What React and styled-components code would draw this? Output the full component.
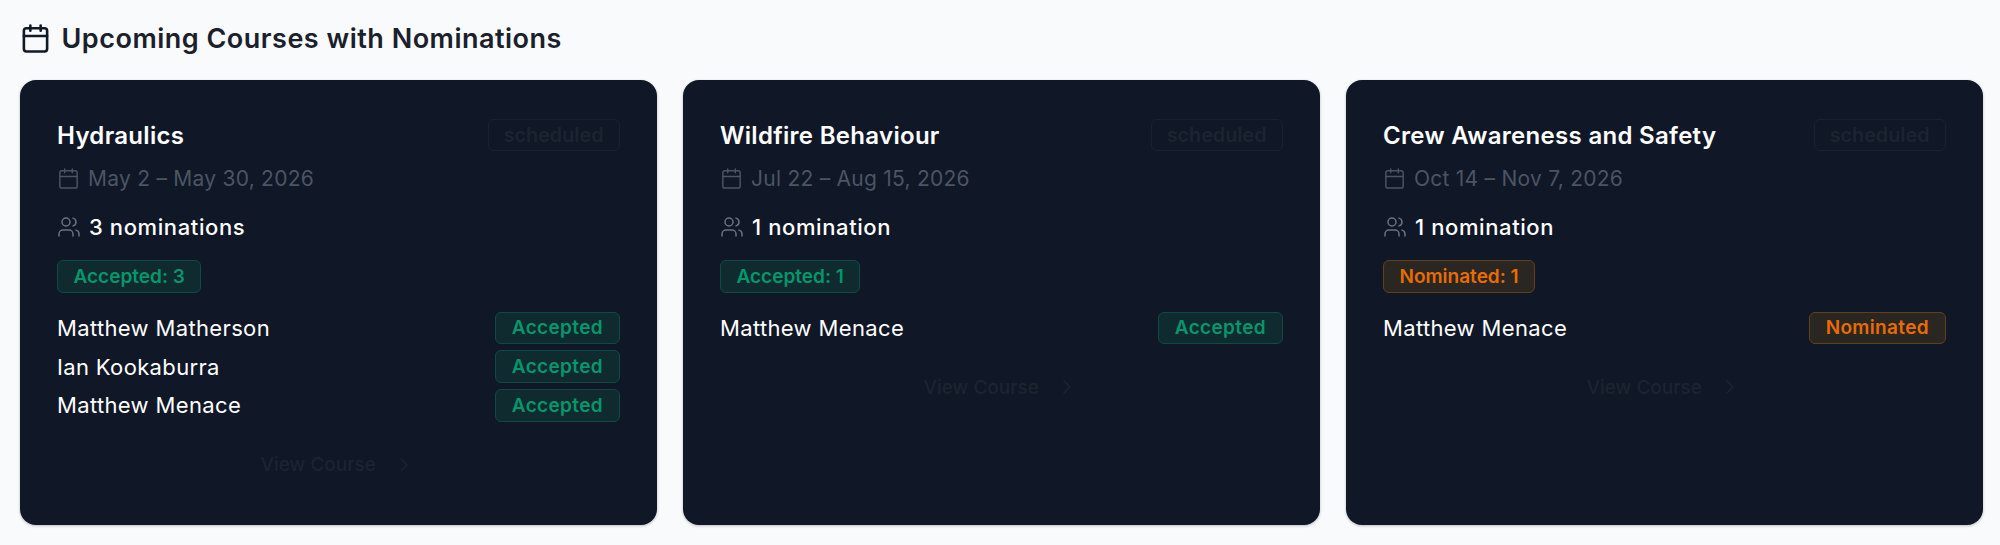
import { createGlobalStyle } from "styled-components";
import styled from "styled-components";
import { Calendar, Users, ChevronRight } from "lucide-react";

const GlobalStyle = createGlobalStyle`
  body {
    margin: 0;
    background: #f9fafc;
    font-family: Inter, "Noto Sans", sans-serif;
  }
`;

const courses = [
  {
    title: "Hydraulics",
    dates: "May 2 – May 30, 2026",
    count: "3 nominations",
    summary: { tone: "accepted", label: "Accepted: 3" },
    people: [
      { name: "Matthew Matherson", tone: "accepted", status: "Accepted" },
      { name: "Ian Kookaburra", tone: "accepted", status: "Accepted" },
      { name: "Matthew Menace", tone: "accepted", status: "Accepted" },
    ],
  },
  {
    title: "Wildfire Behaviour",
    dates: "Jul 22 – Aug 15, 2026",
    count: "1 nomination",
    summary: { tone: "accepted", label: "Accepted: 1" },
    people: [{ name: "Matthew Menace", tone: "accepted", status: "Accepted" }],
  },
  {
    title: "Crew Awareness and Safety",
    dates: "Oct 14 – Nov 7, 2026",
    count: "1 nomination",
    summary: { tone: "nominated", label: "Nominated: 1" },
    people: [{ name: "Matthew Menace", tone: "nominated", status: "Nominated" }],
  },
];

const tones = {
  accepted: { color: "#059669", bg: "#0f2b30", border: "#0f4a45" },
  nominated: { color: "#ea6c00", bg: "#2a2622", border: "#63401a" },
};

export default function App() {
  return (
    <Page>
      <GlobalStyle />
      <Heading>
        <Calendar size={31} strokeWidth={2} />
        <HeadingText>Upcoming Courses with Nominations</HeadingText>
      </Heading>
      <Grid>
        {courses.map((course) => (
          <Card key={course.title}>
            <TitleRow>
              <Title>{course.title}</Title>
              <ScheduledBadge>scheduled</ScheduledBadge>
            </TitleRow>
            <DateRow>
              <Calendar size={23} strokeWidth={1.5} />
              <span>{course.dates}</span>
            </DateRow>
            <CountRow>
              <Users size={24} strokeWidth={1.5} color="#6b7280" />
              <span>{course.count}</span>
            </CountRow>
            <SummaryRow>
              <StatusBadge $tone={course.summary.tone}>{course.summary.label}</StatusBadge>
            </SummaryRow>
            <People>
              {course.people.map((person) => (
                <Person key={person.name}>
                  <span>{person.name}</span>
                  <StatusBadge $tone={person.tone}>{person.status}</StatusBadge>
                </Person>
              ))}
            </People>
            <ViewButton>
              View Course
              <ChevronRight size={24} strokeWidth={1.5} />
            </ViewButton>
          </Card>
        ))}
      </Grid>
    </Page>
  );
}

const Page = styled.div`
  box-sizing: border-box;
  width: 2000px;
  height: 545px;
  padding: 20px 17px 20px 19.5px;
  overflow: hidden;
`;

const Heading = styled.div`
  display: flex;
  align-items: center;
  gap: 11px;
  height: 36px;
  margin-bottom: 24px;
  color: #111827;
`;

const HeadingText = styled.h2`
  margin: 0;
  font-size: 27px;
  font-weight: 600;
  letter-spacing: 0.5px;
  color: #1a202c;
`;

const Grid = styled.div`
  display: grid;
  grid-template-columns: repeat(3, 637px);
  gap: 26px;
`;

const Card = styled.div`
  box-sizing: border-box;
  height: 445px;
  padding: 39px 37px 38px 37.5px;
  background: #101727;
  border-radius: 16px;
  box-shadow: 0 1px 3px rgba(0, 0, 0, 0.25);
`;

const TitleRow = styled.div`
  display: flex;
  align-items: center;
  justify-content: space-between;
  height: 32px;
`;

const Title = styled.h3`
  margin: 0;
  font-size: 24px;
  font-weight: 600;
  letter-spacing: 0.3px;
  color: #ffffff;
`;

const ScheduledBadge = styled.span`
  box-sizing: border-box;
  display: flex;
  align-items: center;
  height: 32px;
  padding: 0 15px;
  border: 1px solid #1a2230;
  border-radius: 6px;
  font-size: 19.8px;
  font-weight: 600;
  color: #1c2430;
`;

const DateRow = styled.div`
  display: flex;
  align-items: center;
  gap: 8px;
  height: 32px;
  margin-top: 11px;
  font-size: 21px;
  letter-spacing: 0.25px;
  color: #4b5563;
`;

const CountRow = styled.div`
  display: flex;
  align-items: center;
  gap: 8px;
  height: 32px;
  margin-top: 17px;
  font-size: 22px;
  font-weight: 500;
  letter-spacing: 0.6px;
  color: #ffffff;
`;

const SummaryRow = styled.div`
  display: flex;
  margin-top: 17px;
`;

const StatusBadge = styled.span`
  box-sizing: border-box;
  display: flex;
  align-items: center;
  height: 32.5px;
  padding: 0 15.5px;
  border: 1px solid ${({ $tone }) => tones[$tone].border};
  border-radius: 6px;
  background: ${({ $tone }) => tones[$tone].bg};
  color: ${({ $tone }) => tones[$tone].color};
  font-size: 19px;
  font-weight: 600;
`;

const People = styled.div`
  display: flex;
  flex-direction: column;
  gap: 6.3px;
  margin-top: 19px;
`;

const Person = styled.div`
  display: flex;
  align-items: center;
  justify-content: space-between;
  font-size: 22px;
  letter-spacing: 0.35px;
  color: #ffffff;
`;

const ViewButton = styled.div`
  display: flex;
  align-items: center;
  justify-content: center;
  gap: 16px;
  height: 46px;
  margin-top: 20px;
  font-size: 19px;
  font-weight: 500;
  color: #1c2430;
`;
